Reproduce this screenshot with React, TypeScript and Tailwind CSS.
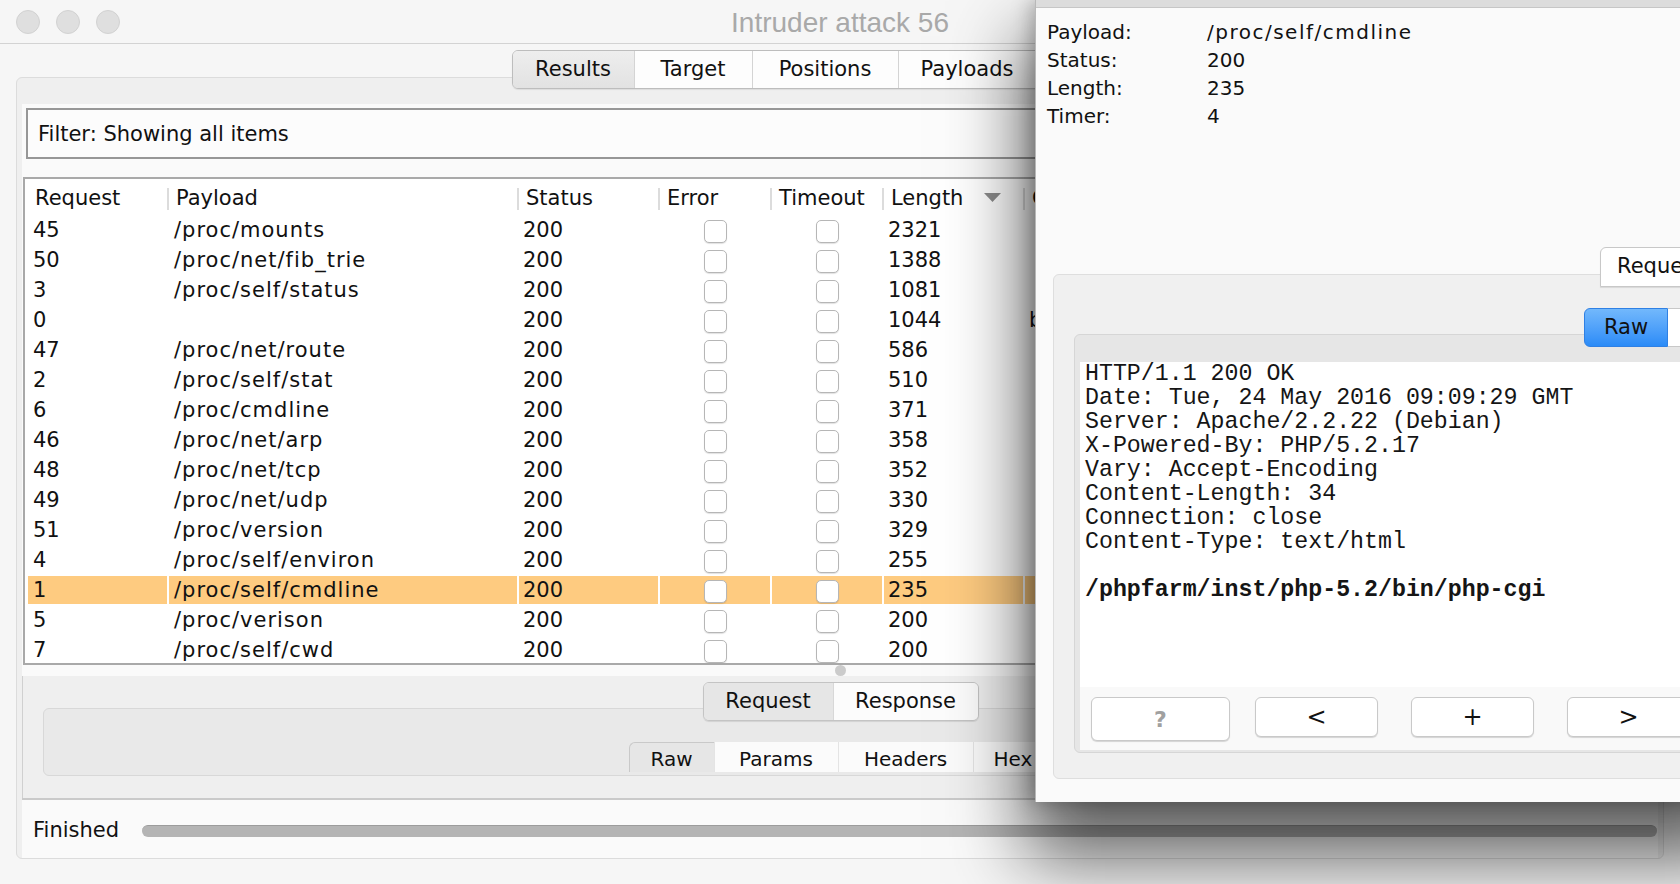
import React from "react";

// Burp-style "Intruder attack" window with a detached response window on top.

type Row = { req: number; payload: string; len: number; comment?: string; sel?: boolean };

const rows: Row[] = [
  { req: 45, payload: "/proc/mounts", len: 2321 },
  { req: 50, payload: "/proc/net/fib_trie", len: 1388 },
  { req: 3, payload: "/proc/self/status", len: 1081 },
  { req: 0, payload: "", len: 1044, comment: "baseline" },
  { req: 47, payload: "/proc/net/route", len: 586 },
  { req: 2, payload: "/proc/self/stat", len: 510 },
  { req: 6, payload: "/proc/cmdline", len: 371 },
  { req: 46, payload: "/proc/net/arp", len: 358 },
  { req: 48, payload: "/proc/net/tcp", len: 352 },
  { req: 49, payload: "/proc/net/udp", len: 330 },
  { req: 51, payload: "/proc/version", len: 329 },
  { req: 4, payload: "/proc/self/environ", len: 255 },
  { req: 1, payload: "/proc/self/cmdline", len: 235, sel: true },
  { req: 5, payload: "/proc/verison", len: 200 },
  { req: 7, payload: "/proc/self/cwd", len: 200 },
];

const cols = "grid grid-cols-[139px_348px_139px_110px_110px_139px_1fr] gap-x-[2px]";

// last tab sits under the response window
const topTabs = [
  { label: "Results", w: "w-[121px]" },
  { label: "Target", w: "w-[118px]" },
  { label: "Positions", w: "w-[146px]" },
  { label: "Payloads", w: "w-[138px]" },
  { label: "", w: "w-[132px]" },
];

const subTabs = [
  { label: "Raw", w: "w-[85px]" },
  { label: "Params", w: "w-[124px]" },
  { label: "Headers", w: "w-[135px]" },
  { label: "Hex", w: "w-[80px]" },
];

const response = [
  "HTTP/1.1 200 OK",
  "Date: Tue, 24 May 2016 09:09:29 GMT",
  "Server: Apache/2.2.22 (Debian)",
  "X-Powered-By: PHP/5.2.17",
  "Vary: Accept-Encoding",
  "Content-Length: 34",
  "Connection: close",
  "Content-Type: text/html",
  "",
];

function Checkbox() {
  return (
    <span className="block h-[23px] w-[23px] rounded-[5px] border border-[#b6b6b6] bg-white shadow-[0_1px_1px_rgba(0,0,0,0.12)]" />
  );
}

function HeadCell({ label, first }: { label: string; first?: boolean }) {
  return (
    <div className="relative flex items-center pl-[7px] pt-[1px] text-[21px]">
      {!first && <span className="absolute -left-[2px] top-[6px] h-[22px] w-[2px] bg-[#dcdcdc]" />}
      <span className="whitespace-nowrap">{label}</span>
    </div>
  );
}

function ResultsTable() {
  return (
    <div className="mx-[1px] mt-[18px] h-[488px] overflow-hidden border-2 border-[#a9a9a9] bg-white pl-[3px] pt-[3px]">
      <div className={`${cols} h-[33px]`}>
        <HeadCell label="Request" first />
        <HeadCell label="Payload" />
        <HeadCell label="Status" />
        <HeadCell label="Error" />
        <HeadCell label="Timeout" />
        <div className="relative flex items-center justify-between pl-[7px] pr-[22px] pt-[1px] text-[21px]">
          <span className="absolute -left-[2px] top-[6px] h-[22px] w-[2px] bg-[#dcdcdc]" />
          <span>Length</span>
          <svg width="17" height="9" viewBox="0 0 17 9" className="-mt-[3px]">
            <path d="M0 0h17L8.5 9z" fill="#8c8c8c" />
          </svg>
        </div>
        <HeadCell label="Comment" />
      </div>
      {rows.map((r) => {
        const cell = `my-[1px] flex h-[28px] items-center pt-[2px] text-[21px] ${r.sel ? "bg-[#fecb80]" : ""}`;
        return (
          <div key={r.req} className={cols}>
            <div className={`${cell} pl-[5px]`}>{r.req}</div>
            <div className={`${cell} pl-[5px] tracking-[1px]`}>{r.payload}</div>
            <div className={`${cell} pl-[4px]`}>200</div>
            <div className={`${cell} justify-center`}>
              <Checkbox />
            </div>
            <div className={`${cell} justify-center`}>
              <Checkbox />
            </div>
            <div className={`${cell} pl-[4px]`}>{r.len}</div>
            <div className={`${cell} whitespace-nowrap pl-[4px]`}>{r.comment ?? ""}</div>
          </div>
        );
      })}
    </div>
  );
}

function ResponseWindow() {
  return (
    <div className="absolute left-[1035px] top-0 z-20 flex h-[802px] w-[700px] flex-col border-l border-[#b8b8b8] bg-[#fafafa] shadow-[-4px_0_18px_rgba(0,0,0,0.25),0_46px_70px_10px_rgba(0,0,0,0.62)]">
      <div className="h-[8px] border-b border-[#c6c6c6] bg-[#dcdcdc]" />

      <div className="grid grid-cols-[160px_1fr] pl-[11px] pt-[10px] text-[20px] leading-[28px]">
        <span>Payload:</span>
        <span className="tracking-[1.5px]">/proc/self/cmdline</span>
        <span>Status:</span>
        <span>200</span>
        <span>Length:</span>
        <span>235</span>
        <span>Timer:</span>
        <span>4</span>
      </div>

      {/* Request / Response tabs */}
      <div className="relative z-10 -mb-[13px] mt-[117px] flex pl-[564px]">
        <div className="flex h-[40px] w-[140px] shrink-0 items-center rounded-tl-[6px] border border-[#c8c8c8] bg-white pl-[16px] text-[21px] shadow-[0_1px_1px_rgba(0,0,0,0.1)]">
          Request
        </div>
      </div>

      <div className="mx-[17px] flex h-[505px] flex-col rounded-[6px] border border-[#dedede] bg-[#f0f0f0] px-[20px] pt-[33px]">
        <div className="relative z-10 -mb-[13px] flex pl-[510px]">
          <div className="flex h-[39px] w-[84px] shrink-0 items-center justify-center rounded-l-[6px] border border-[#2f80e4] bg-gradient-to-b from-[#72b8fc] to-[#2a8bf7] text-[21px] text-[#111]">
            Raw
          </div>
          <div className="flex h-[39px] w-[110px] shrink-0 items-center border border-l-0 border-[#c8c8c8] bg-white pl-[30px] text-[21px]">
            Hex
          </div>
        </div>

        <div className="flex h-[419px] flex-col rounded-[6px] border border-[#d6d6d6] bg-[#e6e6e6] px-[5px] pb-[2px] pt-[27px]">
          <div className="h-[325px] bg-white pl-[5px] font-['Liberation_Mono',monospace] text-[23.25px] leading-[24px] text-[#151515]">
            {response.map((l, i) => (
              <div key={i} className="h-[24px] whitespace-pre">
                {l}
              </div>
            ))}
            <div className="h-[24px] whitespace-pre font-bold">/phpfarm/inst/php-5.2/bin/php-cgi</div>
          </div>
          <div className="flex h-[63px] items-start bg-[#f9f9f9] pl-[11px] pt-[10px]">
            <button className="flex h-[44px] w-[139px] shrink-0 items-center justify-center rounded-[6px] border border-[#c9c9c9] bg-white text-[22px] font-bold text-[#a0a0a0] shadow-[0_1px_1px_rgba(0,0,0,0.15)]">
              ?
            </button>
            <button className="ml-[25px] flex h-[40px] w-[123px] shrink-0 items-center justify-center rounded-[6px] border border-[#c9c9c9] bg-white text-[24px] shadow-[0_1px_1px_rgba(0,0,0,0.15)]">
              &lt;
            </button>
            <button className="ml-[33px] flex h-[40px] w-[123px] shrink-0 items-center justify-center rounded-[6px] border border-[#c9c9c9] bg-white text-[24px] shadow-[0_1px_1px_rgba(0,0,0,0.15)]">
              +
            </button>
            <button className="ml-[33px] flex h-[40px] w-[123px] shrink-0 items-center justify-center rounded-[6px] border border-[#c9c9c9] bg-white text-[24px] shadow-[0_1px_1px_rgba(0,0,0,0.15)]">
              &gt;
            </button>
          </div>
        </div>
      </div>
    </div>
  );
}

export default function App() {
  return (
    <div className="relative h-[884px] w-[1680px] overflow-hidden bg-[#f6f6f6] font-['DejaVu_Sans',sans-serif] text-[#111]">
      {/* Title bar */}
      <div className="grid h-[44px] grid-cols-[1fr_auto_1fr] items-center border-b border-[#d3d3d3] bg-[#f6f6f6]">
        <div className="flex gap-[16px] pl-[16px]">
          <span className="h-[24px] w-[24px] rounded-full border border-[#d2d2d2] bg-[#dfdfdf]" />
          <span className="h-[24px] w-[24px] rounded-full border border-[#d2d2d2] bg-[#dfdfdf]" />
          <span className="h-[24px] w-[24px] rounded-full border border-[#d2d2d2] bg-[#dfdfdf]" />
        </div>
        <div className="pt-[2px] font-['Liberation_Sans',sans-serif] text-[28px] text-[#a9a9a9]">Intruder attack 56</div>
        <div />
      </div>

      {/* Main tabs */}
      <div className="relative z-10 -mb-[12px] flex justify-center pt-[6px]">
        <div className="flex h-[39px] overflow-hidden rounded-[6px] border border-[#bdbdbd] shadow-[0_1px_1px_rgba(0,0,0,0.08)]">
          {topTabs.map((t, i) => (
            <div
              key={i}
              className={`flex items-center justify-center text-[21px] ${t.w} ${
                i === 0 ? "bg-gradient-to-b from-[#eeeeee] to-[#e2e2e2]" : "border-l border-[#d4d4d4] bg-[#fdfdfd]"
              }`}
            >
              {t.label}
            </div>
          ))}
        </div>
      </div>

      {/* Tab panel */}
      <div className="mx-[16px] flex h-[782px] flex-col rounded-[6px] border border-[#dcdcdc] bg-[#efefef] px-[5px] pt-[26px]">
        <div className="flex flex-1 flex-col">
          <div className="bg-[#fafafa]">
            <div className="mx-[4px] mt-[4px] flex h-[51px] items-center border-2 border-[#979797] bg-[#fcfcfc] pl-[10px] pt-[2px] text-[21px]">
              Filter: Showing all items
            </div>
            <ResultsTable />
            <div className="flex h-[11px] items-center justify-center">
              <span className="h-[11px] w-[11px] rounded-full bg-[#cbcbcb]" />
            </div>
          </div>

          {/* Request / Response viewer */}
          <div className="flex h-[122px] flex-col border-l border-[#d0d0d0] bg-[#efefef] px-[20px] pt-[6px]">
            <div className="relative z-10 -mb-[13px] flex justify-center">
              <div className="flex h-[39px] overflow-hidden rounded-[6px] border border-[#c4c4c4] shadow-[0_1px_1px_rgba(0,0,0,0.1)]">
                <div className="flex w-[129px] items-center justify-center bg-[#e6e6e6] text-[21px]">Request</div>
                <div className="flex w-[145px] items-center justify-center border-l border-[#d8d8d8] bg-[#fcfcfc] text-[21px]">
                  Response
                </div>
              </div>
            </div>
            <div className="flex h-[68px] justify-center rounded-[6px] border border-[#d8d8d8] bg-[#e9e9e9] pt-[33px]">
              <div className="flex h-[30px]">
                {subTabs.map((t, i) => (
                  <div
                    key={t.label}
                    className={`flex items-center justify-center pt-[3px] text-[20px] ${t.w} ${
                      i === 0
                        ? "rounded-tl-[6px] border-l border-t border-[#c9c9c9] bg-[#e6e6e6]"
                        : "border-l border-[#e4e4e4] bg-[#fbfbfb]"
                    }`}
                  >
                    {t.label}
                  </div>
                ))}
              </div>
            </div>
          </div>

          {/* Status bar */}
          <div className="flex flex-1 items-center border-t-2 border-[#cacaca] bg-[#fafafa] pl-[11px] pr-[1px] pt-[4px]">
            <span className="text-[21px]">Finished</span>
            <div className="ml-[23px] h-[12px] flex-1 rounded-full border-t border-[#9c9c9c] bg-[#b4b4b4]" />
          </div>
        </div>
      </div>

      <ResponseWindow />
    </div>
  );
}
